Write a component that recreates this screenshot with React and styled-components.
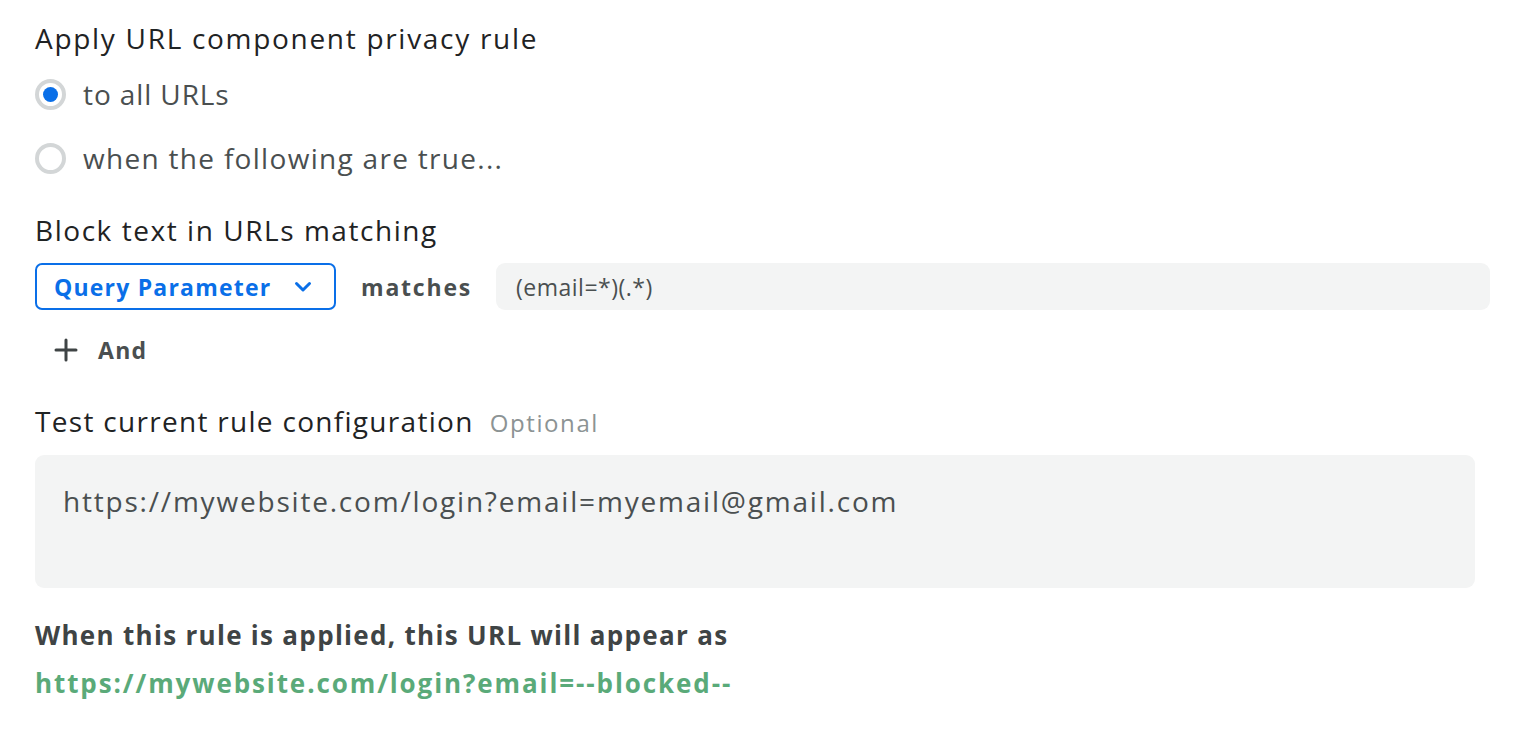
import styled, { createGlobalStyle } from "styled-components";

const GlobalStyle = createGlobalStyle`
  html, body {
    margin: 0;
    padding: 0;
    background: #ffffff;
  }
  body {
    font-family: "Open Sans", "Liberation Sans", sans-serif;
    color: #1f2324;
  }
  * {
    box-sizing: border-box;
  }
`;

const Page = styled.div`
  width: 1520px;
  padding: 20px 30px 0 35px;
  display: flex;
  flex-direction: column;
`;

const Heading = styled.div`
  font-size: 28px;
  line-height: 36px;
  letter-spacing: ${(p) => p.$ls || 1.5}px;
  color: #1f2324;
  display: flex;
  align-items: baseline;
  gap: 16px;
  margin-top: ${(p) => p.$top || 0}px;
`;

const Hint = styled.span`
  font-size: 24px;
  letter-spacing: 1.6px;
  color: #8c9394;
`;

const RadioList = styled.div`
  display: flex;
  flex-direction: column;
  gap: 32px;
  margin-top: 22px;
`;

const RadioRow = styled.label`
  display: flex;
  align-items: center;
  gap: 17px;
  font-size: 28px;
  line-height: 32px;
  letter-spacing: ${(p) => p.$ls || 1}px;
  color: #4a4f50;
  cursor: pointer;
`;

const RadioDot = styled.span`
  width: 31px;
  height: 31px;
  border-radius: 50%;
  border: 4px solid #d3d6d7;
  display: flex;
  align-items: center;
  justify-content: center;
  flex-shrink: 0;
  &::after {
    content: "";
    width: 15px;
    height: 15px;
    border-radius: 50%;
    background: ${(p) => (p.$checked ? "#0a6fe8" : "transparent")};
  }
`;

const RuleRow = styled.div`
  display: flex;
  align-items: center;
  margin-top: 15px;
`;

const Select = styled.button`
  width: 301px;
  height: 47px;
  border: 2px solid #0a6fe8;
  border-radius: 7px;
  background: #ffffff;
  color: #0a6fe8;
  font-family: inherit;
  font-weight: 700;
  font-size: 23px;
  letter-spacing: 1.2px;
  display: flex;
  align-items: center;
  justify-content: space-between;
  padding: 0 22px 0 17px;
  cursor: pointer;
`;

const Matches = styled.span`
  font-size: 23px;
  font-weight: 700;
  letter-spacing: 1.8px;
  color: #4a4f50;
  margin: 0 24px 0 25px;
`;

const PatternInput = styled.input`
  flex: 1;
  height: 47px;
  border: none;
  border-radius: 9px;
  background: #f3f4f4;
  font-family: inherit;
  font-size: 23px;
  letter-spacing: 0.5px;
  color: #4a4f50;
  padding: 0 20px;
  outline: none;
`;

const AddButton = styled.button`
  display: flex;
  align-items: center;
  gap: 20px;
  align-self: flex-start;
  background: none;
  border: none;
  font-family: inherit;
  font-size: 23px;
  font-weight: 700;
  letter-spacing: 1.3px;
  color: #4a4f50;
  padding: 0 0 0 19px;
  margin-top: 24px;
  cursor: pointer;
`;

const TestArea = styled.textarea`
  margin-top: 14px;
  width: 1440px;
  height: 133px;
  border: none;
  border-radius: 9px;
  background: #f3f4f4;
  font-family: inherit;
  font-size: 28px;
  line-height: 36px;
  letter-spacing: 1.8px;
  color: #4a4f50;
  padding: 28px 28px;
  resize: none;
  outline: none;
`;

const ResultLabel = styled.div`
  margin-top: 31px;
  font-size: 26px;
  font-weight: 700;
  letter-spacing: 1.3px;
  color: #3f4445;
  line-height: 32px;
`;

const ResultUrl = styled.div`
  margin-top: 16px;
  font-size: 26px;
  font-weight: 700;
  letter-spacing: 1.9px;
  color: #5aaa79;
  line-height: 32px;
`;

function Chevron() {
  return (
    <svg width="18" height="12" viewBox="0 0 18 12" fill="none">
      <path
        d="M2.5 2.5L9 9L15.5 2.5"
        stroke="#0a6fe8"
        strokeWidth="3"
        strokeLinecap="round"
        strokeLinejoin="round"
      />
    </svg>
  );
}

function Plus() {
  return (
    <svg width="24" height="24" viewBox="0 0 24 24" fill="none">
      <path
        d="M12 2V22M2 12H22"
        stroke="#3f4445"
        strokeWidth="3"
        strokeLinecap="round"
      />
    </svg>
  );
}

export default function App() {
  return (
    <>
      <GlobalStyle />
      <Page>
        <Heading $ls={1.7}>Apply URL component privacy rule</Heading>
        <RadioList>
          <RadioRow $ls={0.9}>
            <RadioDot $checked />
            to all URLs
          </RadioRow>
          <RadioRow $ls={1.3}>
            <RadioDot />
            when the following are true...
          </RadioRow>
        </RadioList>

        <Heading $top={38} $ls={1.55}>
          Block text in URLs matching
        </Heading>
        <RuleRow>
          <Select>
            Query Parameter
            <Chevron />
          </Select>
          <Matches>matches</Matches>
          <PatternInput defaultValue="(email=*)(.*)" />
        </RuleRow>
        <AddButton>
          <Plus />
          And
        </AddButton>

        <Heading $top={37} $ls={1.3}>
          Test current rule configuration
          <Hint>Optional</Hint>
        </Heading>
        <TestArea defaultValue="https://mywebsite.com/login?email=myemail@gmail.com" />

        <ResultLabel>When this rule is applied, this URL will appear as</ResultLabel>
        <ResultUrl>https://mywebsite.com/login?email=--blocked--</ResultUrl>
      </Page>
    </>
  );
}
